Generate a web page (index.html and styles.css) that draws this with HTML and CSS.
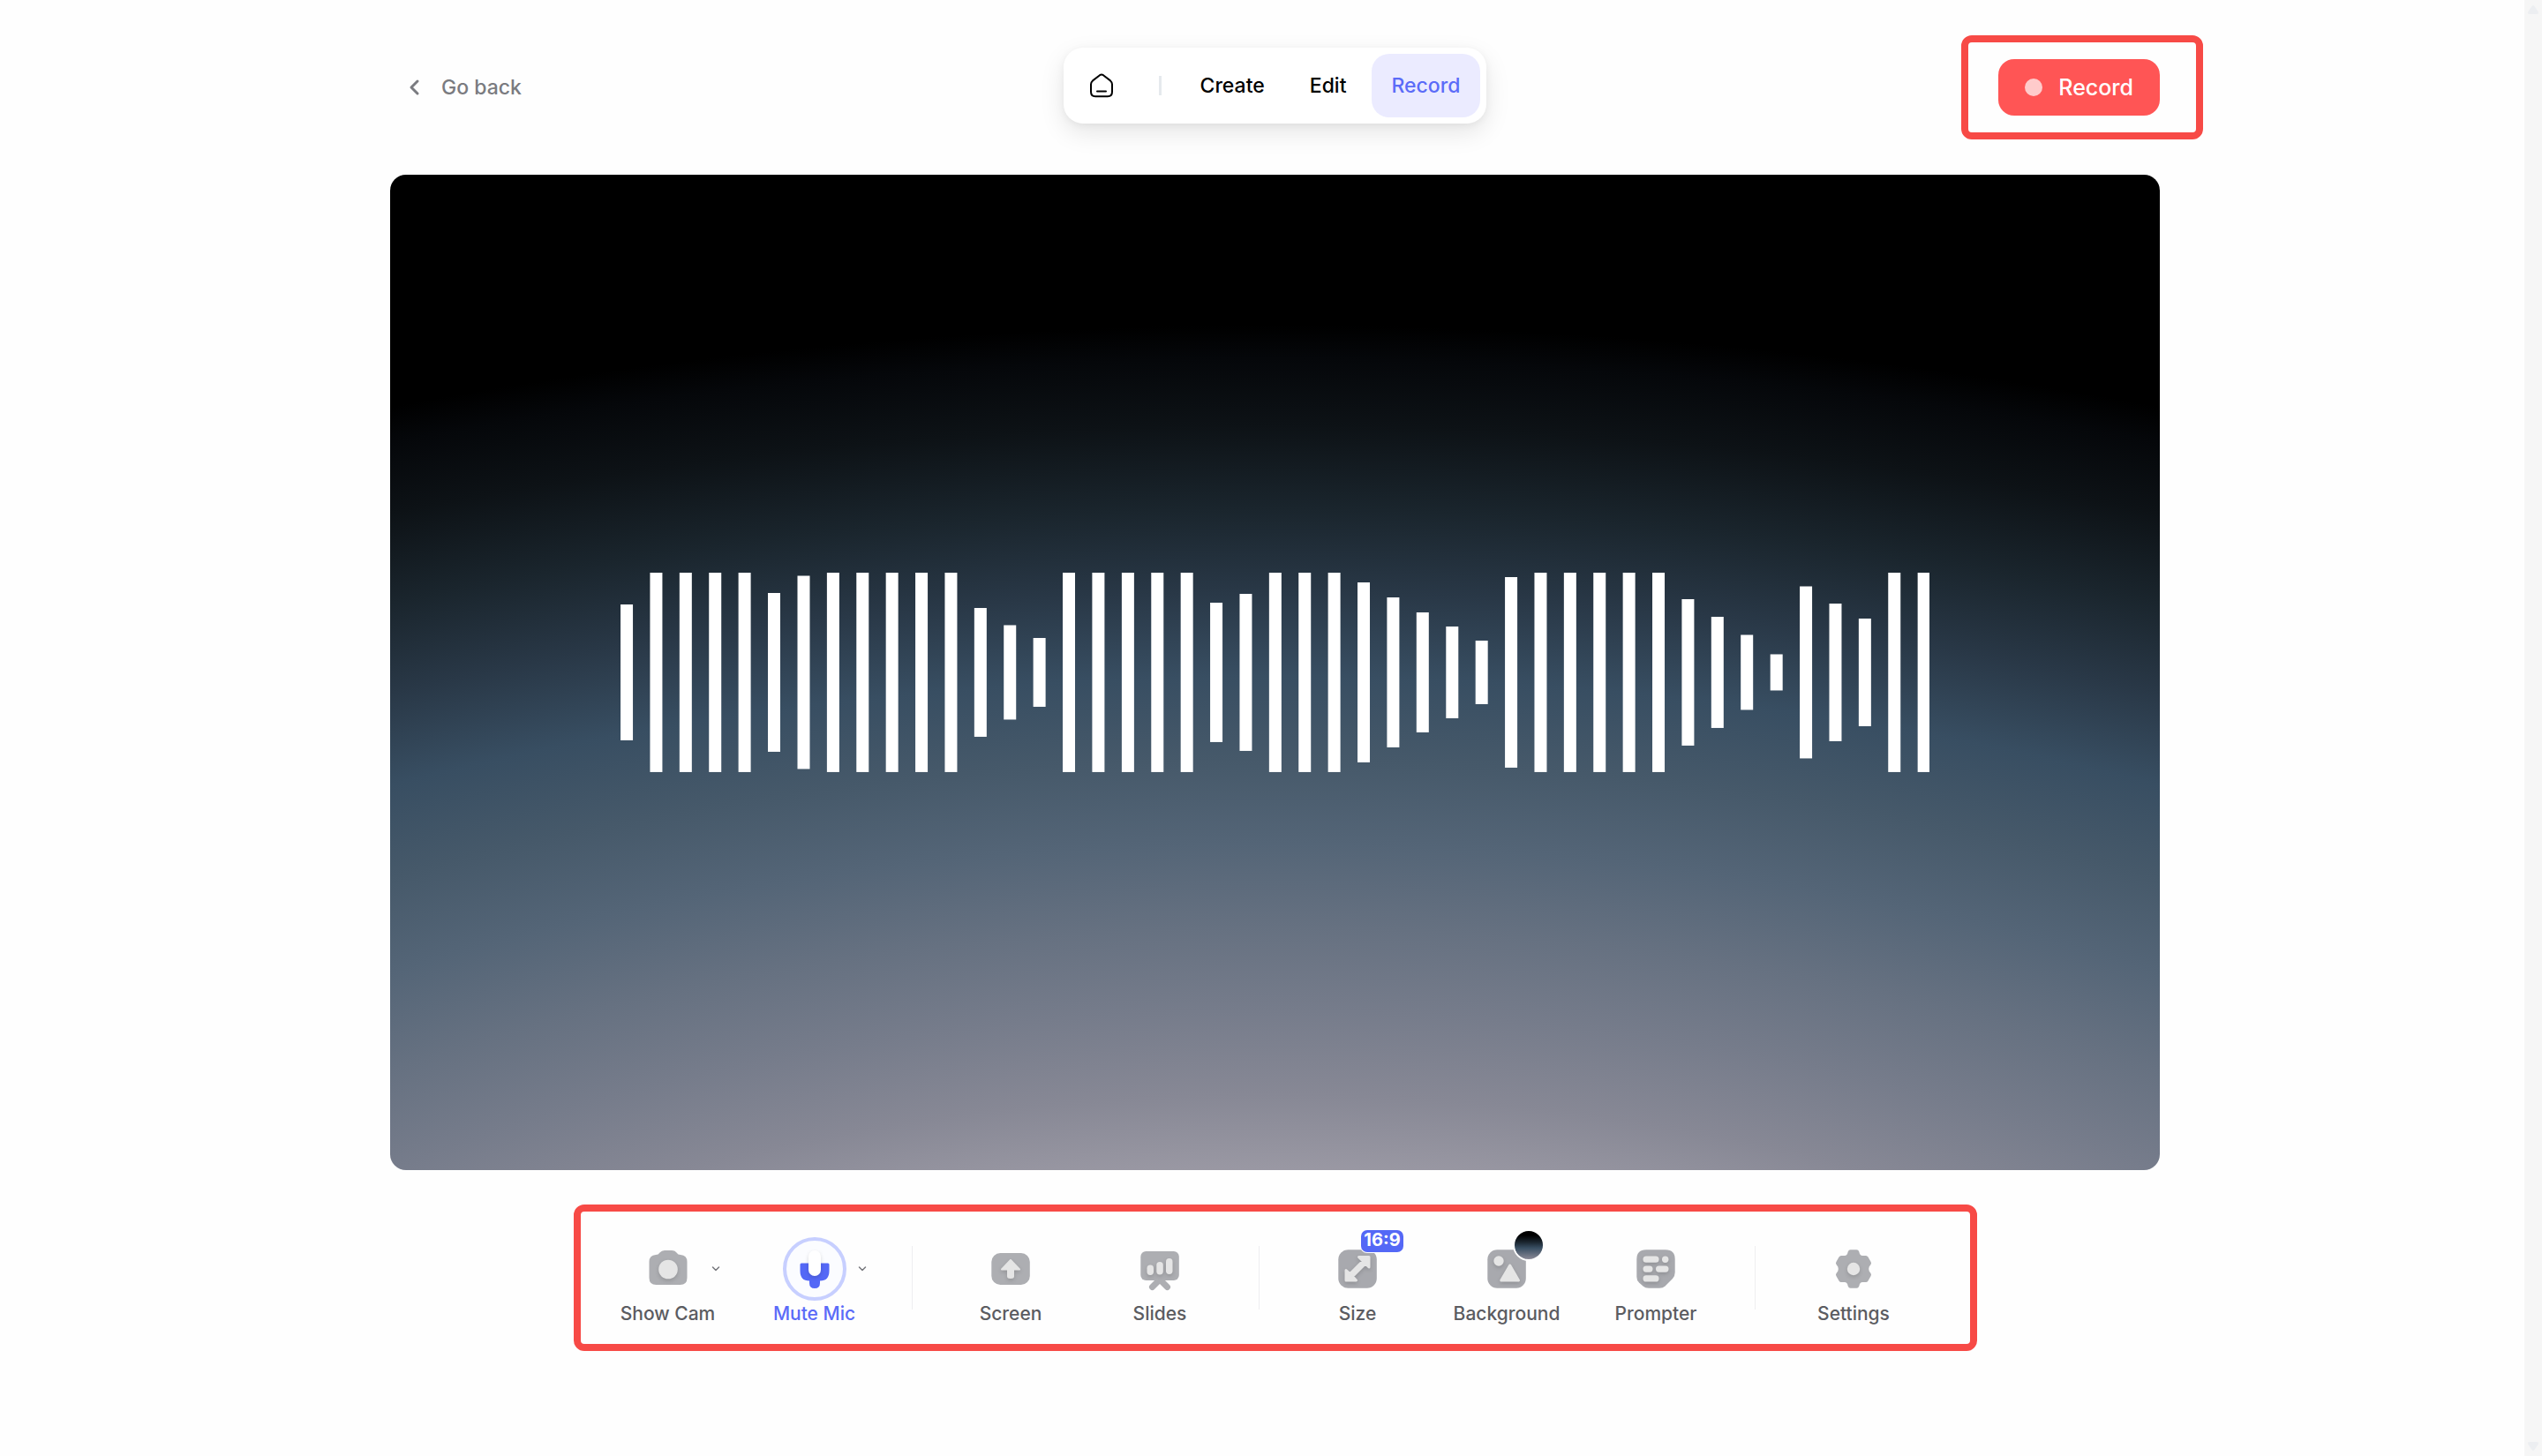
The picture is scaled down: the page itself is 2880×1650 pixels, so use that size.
FILE: index.html
```html
<!DOCTYPE html>
<html lang="en">
<head>
    <meta charset="UTF-8">
    <meta name="viewport" content="width=device-width, initial-scale=1.0">
    <title>Record</title>
    <link rel="stylesheet" href="styles.css">
</head>
<body>
    <div class="workspace">
        <div class="page">
            <header class="header">
                <a class="back" href="#">
                    <svg width="20" height="24" viewBox="0 0 20 24" fill="none" stroke="currentColor" stroke-width="3" stroke-linecap="round" stroke-linejoin="round"><path d="M13 5L6 12L13 19"/></svg>
                    Go back
                </a>
                <nav class="nav">
                    <a class="nav-link" href="#" aria-label="Home">
                        <svg width="26" height="28" viewBox="0 0 26 28" fill="none" stroke="currentColor" stroke-width="2" stroke-linecap="round" stroke-linejoin="round"><path d="M11 2.2Q13 1 15 2.2L23 8.4Q25 10.2 25 12.5V21Q25 26.2 20 26.2H6Q1 26.2 1 21V12.5Q1 10.2 3 8.4Z"/><path d="M8 20.5H18"/></svg>
                    </a>
                    <span class="nav-divider"></span>
                    <a class="nav-link" href="#">Create</a>
                    <a class="nav-link" href="#">Edit</a>
                    <a class="nav-link active" href="#">Record</a>
                </nav>
                <div class="record-area">
                    <button class="record-button" type="button"><span class="record-dot"></span>Record</button>
                </div>
            </header>

            <main>
                <section class="stage">
                    <svg class="waveform" viewBox="0 0 1484 226" fill="#fff">
                        <rect x="0" y="36" width="14" height="154"/>
                        <rect x="33.4" y="0" width="14" height="226"/>
                        <rect x="66.8" y="0" width="14" height="226"/>
                        <rect x="100.2" y="0" width="14" height="226"/>
                        <rect x="133.6" y="0" width="14" height="226"/>
                        <rect x="167" y="23" width="14" height="180"/>
                        <rect x="200.5" y="3.5" width="14" height="219"/>
                        <rect x="233.9" y="0" width="14" height="226"/>
                        <rect x="267.3" y="0" width="14" height="226"/>
                        <rect x="300.7" y="0" width="14" height="226"/>
                        <rect x="334.1" y="0" width="14" height="226"/>
                        <rect x="367.5" y="0" width="14" height="226"/>
                        <rect x="400.9" y="40" width="14" height="146"/>
                        <rect x="434.3" y="59.5" width="14" height="107"/>
                        <rect x="467.7" y="74" width="14" height="78"/>
                        <rect x="501.1" y="0" width="14" height="226"/>
                        <rect x="534.5" y="0" width="14" height="226"/>
                        <rect x="568" y="0" width="14" height="226"/>
                        <rect x="601.4" y="0" width="14" height="226"/>
                        <rect x="634.8" y="0" width="14" height="226"/>
                        <rect x="668.2" y="34" width="14" height="158"/>
                        <rect x="701.6" y="24" width="14" height="178"/>
                        <rect x="735" y="0" width="14" height="226"/>
                        <rect x="768.4" y="0" width="14" height="226"/>
                        <rect x="801.8" y="0" width="14" height="226"/>
                        <rect x="835.2" y="11" width="14" height="204"/>
                        <rect x="868.6" y="28" width="14" height="170"/>
                        <rect x="902" y="45" width="14" height="136"/>
                        <rect x="935.5" y="61" width="14" height="104"/>
                        <rect x="968.9" y="77" width="14" height="72"/>
                        <rect x="1002.3" y="5" width="14" height="216"/>
                        <rect x="1035.7" y="0" width="14" height="226"/>
                        <rect x="1069.1" y="0" width="14" height="226"/>
                        <rect x="1102.5" y="0" width="14" height="226"/>
                        <rect x="1135.9" y="0" width="14" height="226"/>
                        <rect x="1169.3" y="0" width="14" height="226"/>
                        <rect x="1202.7" y="30" width="14" height="166"/>
                        <rect x="1236.1" y="50" width="14" height="126"/>
                        <rect x="1269.5" y="70.5" width="14" height="85"/>
                        <rect x="1303" y="92.5" width="14" height="41"/>
                        <rect x="1336.4" y="15.5" width="14" height="195"/>
                        <rect x="1369.8" y="35" width="14" height="156"/>
                        <rect x="1403.2" y="52" width="14" height="122"/>
                        <rect x="1436.6" y="0" width="14" height="226"/>
                        <rect x="1470" y="0" width="14" height="226"/>
                    </svg>
                </section>

                <div class="toolbar">
                    <div class="tool-group">
                        <button class="tool" type="button">
                            <span class="tool-icon">
                                <svg class="icon" viewBox="-24 -24 48 48"><path fill="#adaeb2" d="M-4 -21H4Q7.5 -21 9.5 -18.5Q11 -16 14 -16Q21.5 -15.5 21.5 -8V10Q21.5 18 13.5 18H-13.5Q-21.5 18 -21.5 10V-8Q-21.5 -15.5 -14 -16Q-11 -16 -9.5 -18.5Q-7.5 -21 -4 -21Z"/><circle class="lift" cx="0" cy="0.5" r="10.8" fill="#e5e5e5"/></svg>
                            </span>
                            Show Cam
                        </button>
                        <button class="caret" type="button" aria-label="Choose camera">
                            <svg width="12" height="12" viewBox="0 0 12 12" fill="none" stroke="currentColor" stroke-width="1.5" stroke-linecap="round" stroke-linejoin="round"><path d="M2.5 4L6 7.5L9.5 4"/></svg>
                        </button>
                    </div>
                    <div class="tool-group">
                        <button class="tool tool-on" type="button">
                            <span class="tool-icon ring">
                                <svg class="icon" viewBox="-24 -24 48 48"><path fill="#5468f6" d="M-15 -6.5H15Q16.5 -6.5 16.5 -5V2Q16.5 13.5 6 13.5V16Q6 22 0 22Q-6 22 -6 16V13.5Q-16.5 13.5 -16.5 2V-5Q-16.5 -6.5 -15 -6.5Z"/><rect class="lift" x="-7" y="-21" width="14" height="29" rx="7" fill="#fff"/></svg>
                            </span>
                            Mute Mic
                        </button>
                        <button class="caret" type="button" aria-label="Choose microphone">
                            <svg width="12" height="12" viewBox="0 0 12 12" fill="none" stroke="currentColor" stroke-width="1.5" stroke-linecap="round" stroke-linejoin="round"><path d="M2.5 4L6 7.5L9.5 4"/></svg>
                        </button>
                    </div>
                    <span class="divider"></span>
                    <button class="tool" type="button">
                        <span class="tool-icon">
                            <svg class="icon" viewBox="-24 -24 48 48"><rect x="-21.7" y="-18" width="43.5" height="36" rx="10" fill="#adaeb2"/><path class="lift" fill="#e5e5e5" stroke="#e5e5e5" stroke-width="2" stroke-linejoin="round" d="M0 -10L10 0.5H3V8.5Q3 10 0 10Q-3 10 -3 8.5V0.5H-10Z"/></svg>
                        </span>
                        Screen
                    </button>
                    <button class="tool" type="button">
                        <span class="tool-icon">
                            <svg class="icon" viewBox="-24 -24 48 48"><rect x="-21.7" y="-20" width="43.5" height="33" rx="6" fill="#adaeb2"/><path d="M0 12L-8.5 20.5M0 12L8.5 20.5" fill="none" stroke="#adaeb2" stroke-width="7" stroke-linecap="round"/><g class="lift" fill="#e5e5e5"><rect x="-14.5" y="-4.5" width="7.5" height="11.5" rx="3.7"/><rect x="-3.7" y="-8" width="7.5" height="14.5" rx="3.7"/><rect x="7" y="-12" width="7.5" height="18" rx="3.7"/></g></svg>
                        </span>
                        Slides
                    </button>
                    <span class="divider"></span>
                    <button class="tool" type="button">
                        <span class="tool-icon">
                            <svg class="icon" viewBox="-24 -24 48 48"><rect x="-21.7" y="-21.7" width="43.5" height="43.5" rx="11" fill="#a8a9ae"/><path class="lift" fill="#e5e5e5" stroke="#e5e5e5" stroke-width="3" stroke-linejoin="round" d="M1.5 -13.5H13V-2L9 -6L-5.5 8.5L-1.5 13H-13V1.5L-8.5 5.5L6 -9Z"/></svg>
                            <span class="ratio">16:9</span>
                        </span>
                        Size
                    </button>
                    <button class="tool" type="button">
                        <span class="tool-icon">
                            <svg class="icon" viewBox="-24 -24 48 48"><rect x="-21.7" y="-21.7" width="43.5" height="43.5" rx="11" fill="#a8a9ae"/><g class="lift" fill="#e5e5e5"><circle cx="-9" cy="-9" r="5.7"/><path stroke="#e5e5e5" stroke-width="3" stroke-linejoin="round" d="M3.7 -4L13.5 13H-6.2Z"/></g></svg>
                            <span class="swatch"></span>
                        </span>
                        Background
                    </button>
                    <button class="tool" type="button">
                        <span class="tool-icon">
                            <svg class="icon" viewBox="-24 -24 48 48"><path fill="#a8a9ae" d="M-11 -21.7H11Q21.7 -21.7 21.7 -11V4Q21.7 8 19 11L10.5 19.5Q8 21.7 4 21.7H-8Q-12 21.7 -14.5 19.5L-19 15.5Q-21.7 13 -21.7 9V-11Q-21.7 -21.7 -11 -21.7Z"/><g class="lift" fill="#e5e5e5"><rect x="-14.5" y="-14.5" width="18" height="7.3" rx="3.6"/><circle cx="10.7" cy="-10.8" r="3.7"/><rect x="-14.5" y="-3.6" width="11" height="7.3" rx="3.6"/><rect x="0" y="-3.6" width="14.5" height="7.3" rx="3.6"/><rect x="-14.5" y="7.2" width="18" height="7.3" rx="3.6"/></g></svg>
                        </span>
                        Prompter
                    </button>
                    <span class="divider"></span>
                    <button class="tool" type="button">
                        <span class="tool-icon">
                            <svg class="icon" viewBox="-24 -24 48 48"><path fill="#adaeb2" d="M-3.5 -21.7H3.5Q5.5 -21.7 6.3 -19.5L7 -17Q8 -15 10 -15H14Q15.5 -15 16.5 -13.5L19.6 -8Q20.5 -6.5 19.5 -5L17.7 -2.5Q16.7 0 17.7 2.5L19.5 5Q20.5 6.5 19.6 8L16.5 13.5Q15.5 15 14 15H10Q8 15 7 17L6.3 19.5Q5.5 21.7 3.5 21.7H-3.5Q-5.5 21.7 -6.3 19.5L-7 17Q-8 15 -10 15H-14Q-15.5 15 -16.5 13.5L-19.6 8Q-20.5 6.5 -19.5 5L-17.7 2.5Q-16.7 0 -17.7 -2.5L-19.5 -5Q-20.5 -6.5 -19.6 -8L-16.5 -13.5Q-15.5 -15 -14 -15H-10Q-8 -15 -7 -17L-6.3 -19.5Q-5.5 -21.7 -3.5 -21.7Z"/><circle class="lift" r="7.2" fill="#e5e5e5"/></svg>
                        </span>
                        Settings
                    </button>
                </div>
            </main>
        </div>
    </div>

    <div class="scrollbar">
        <svg width="12" height="10" viewBox="0 0 12 10" fill="#eceef1"><path d="M4.5 1Q6 -1 7.5 1L11.5 7Q13 10 10 10H2Q-1 10 0.5 7Z"/></svg>
        <svg width="12" height="10" viewBox="0 0 12 10" fill="#eceef1"><path d="M4.5 9Q6 11 7.5 9L11.5 3Q13 0 10 0H2Q-1 0 0.5 3Z"/></svg>
    </div>
</body>
</html>
```
FILE: styles.css
```css
* {
    box-sizing: border-box;
}
body {
    margin: 0;
    min-height: 100vh;
    display: flex;
    background-color: #fefefe;
    font-family: Inter, "Liberation Sans", sans-serif;
    color: #55565b;
}
button {
    border: none;
    background: none;
    padding: 0;
    font-family: inherit;
    cursor: pointer;
}
a {
    text-decoration: none;
}
svg {
    display: block;
}
.workspace {
    flex: 1;
    padding-left: 29px;
}
.page {
    width: 94%;
    max-width: 2005px;
    margin: 0 auto;
}

/* Header */
.header {
    display: grid;
    grid-template-columns: 1fr auto 1fr;
    align-items: center;
    height: 198px;
}
.back {
    display: flex;
    align-items: center;
    gap: 20px;
    padding-left: 18px;
    font-size: 23px;
    font-weight: 500;
    color: #7a7b80;
}
.nav {
    display: flex;
    align-items: center;
    gap: 5px;
    padding: 7px;
    margin-bottom: 4px;
    border-radius: 22px;
    background-color: #fff;
    box-shadow: 0 10px 28px rgba(0, 0, 0, 0.1), 0 2px 8px rgba(0, 0, 0, 0.05);
}
.nav-link {
    display: flex;
    align-items: center;
    height: 72px;
    padding: 0 23px;
    border-radius: 20px;
    font-size: 23px;
    font-weight: 500;
    color: #000;
}
.nav-link.active {
    background-color: #ebebff;
    color: #5b6bf8;
}
.nav-divider {
    width: 3px;
    height: 22px;
    margin: 0 16px 0 24px;
    background-color: #e5e9ed;
}
.record-area {
    position: relative;
    justify-self: end;
}
.record-area::after {
    content: "";
    position: absolute;
    inset: -27px -49px -27px -42px;
    border: 8px solid #f74a46;
    border-radius: 12px;
    pointer-events: none;
}
.record-button {
    display: flex;
    align-items: center;
    gap: 18px;
    height: 64px;
    padding: 0 30px;
    border-radius: 18px;
    background-color: #ff5555;
    font-size: 25px;
    font-weight: 500;
    color: #fff;
}
.record-dot {
    width: 20px;
    height: 20px;
    border-radius: 50%;
    background-color: #ffcbcb;
}

/* Preview */
.stage {
    display: flex;
    align-items: center;
    justify-content: center;
    aspect-ratio: 16 / 9;
    border-radius: 18px;
    background: radial-gradient(170% 168% at 50% 168%, #9c9aa5 40%, #878895 45%, #767c8b 50%, #667181 55%, #546577 60%, #46596a 65%, #384e62 70%, #293847 75%, #1a252d 80%, #0d1216 85%, #05070a 89%, #000 91%);
}
.waveform {
    width: 74%;
}

/* Toolbar */
.toolbar {
    display: flex;
    align-items: center;
    width: fit-content;
    margin: 39px auto 0;
    padding: 16px 47px 16px 16px;
    border: 8px solid #f74a46;
    border-radius: 12px;
}
.tool-group {
    display: grid;
    grid-template-columns: 47px 72px 47px;
    grid-template-rows: 98px 20px;
}
.tool {
    display: flex;
    flex-direction: column;
    align-items: center;
    width: 169px;
    height: 118px;
    padding-top: 13px;
    font-size: 21px;
    font-weight: 500;
    line-height: 30px;
    color: #5b5c61;
}
.tool-group .tool {
    grid-area: 1 / 1 / 3 / 4;
    width: 166px;
}
.tool-group .tool-on {
    color: #5b6bf8;
}
.tool-icon {
    position: relative;
    display: flex;
    align-items: center;
    justify-content: center;
    width: 72px;
    height: 72px;
}
.ring {
    border: 4px solid #c7cfff;
    border-radius: 50%;
    background-color: #fbfcff;
}
.icon {
    flex: none;
    width: 48px;
    height: 48px;
    overflow: visible;
}
.lift {
    filter: drop-shadow(0 2px 2px rgba(0, 0, 0, 0.15));
}
.caret {
    grid-area: 1 / 3;
    z-index: 1;
    display: flex;
    align-items: center;
    justify-content: center;
    width: 36px;
    color: #77787d;
}
.divider {
    width: 1px;
    height: 72px;
    margin: 0 27px;
    background-color: #eeeef0;
}
.ratio {
    position: absolute;
    top: -8px;
    left: 40px;
    width: 48px;
    height: 25px;
    border-radius: 7px;
    background-color: #5468f6;
    box-shadow: 0 0 0 1px #fefefe;
    font-size: 20px;
    font-weight: 700;
    line-height: 23px;
    color: #fff;
}
.swatch {
    position: absolute;
    top: -7px;
    left: 45px;
    width: 32px;
    height: 32px;
    border-radius: 50%;
    background: linear-gradient(#000 15%, #1b2630 40%, #384e62 60%, #8a8996);
    box-shadow: 0 0 0 2px #fefefe;
}

/* Scroll track */
.scrollbar {
    display: flex;
    flex-direction: column;
    align-items: center;
    justify-content: space-between;
    width: 20px;
    padding: 6px 0;
    background-color: #f6f6f6;
}
```
